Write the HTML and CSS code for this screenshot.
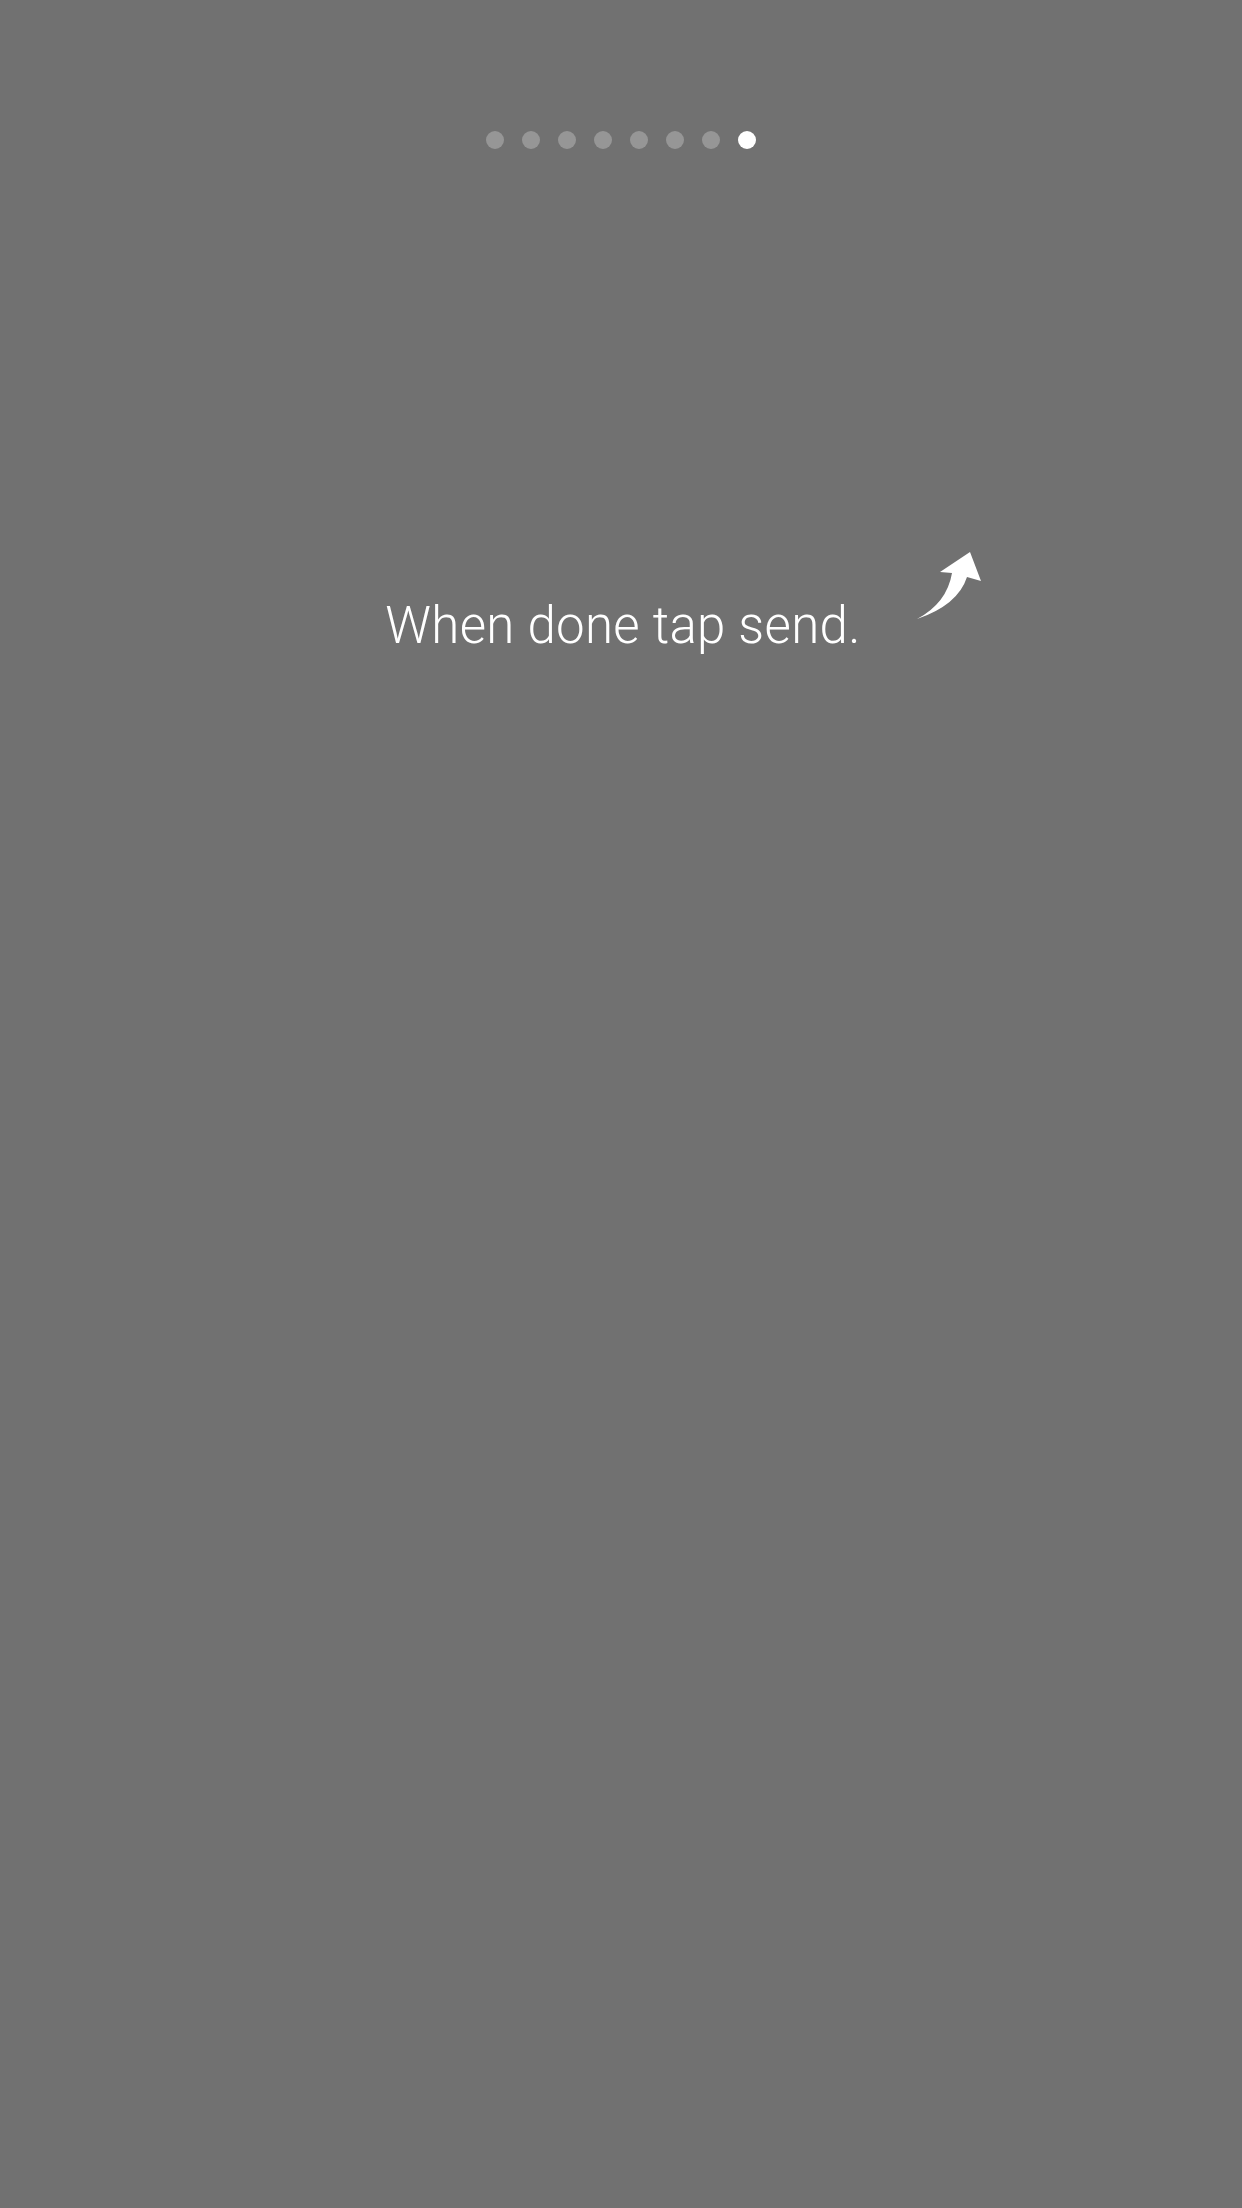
FILE: index.html
```html
<!DOCTYPE html>
<html>
<head>
<meta charset="utf-8">
<link rel="stylesheet" href="styles.css">
</head>
<body>
<div class="screen">
  <div class="pager">
    <span class="dot"></span>
    <span class="dot"></span>
    <span class="dot"></span>
    <span class="dot"></span>
    <span class="dot"></span>
    <span class="dot"></span>
    <span class="dot"></span>
    <span class="dot active"></span>
  </div>
  <div class="hint">
    <p class="hint-text">When done tap send.</p>
    <svg class="arrow" width="80" height="80" viewBox="0 0 80 80">
      <path d="M60 7 L71 36 L57 32 Q48 60 7 74 Q37 58 42 28 L30 27 Z" fill="#ffffff"/>
    </svg>
  </div>
</div>
</body>
</html>
```
FILE: styles.css
```css
html, body {
  margin: 0;
  padding: 0;
  background: #717171;
}
.screen {
  width: 1242px;
  height: 2208px;
  display: flex;
  flex-direction: column;
  align-items: center;
  background: #717171;
}
.pager {
  display: flex;
  gap: 18px;
  margin-top: 131px;
}
.dot {
  width: 18px;
  height: 18px;
  border-radius: 50%;
  background: #969696;
}
.dot.active {
  background: #ffffff;
}
.hint {
  position: relative;
  width: 1242px;
  margin-top: 446px;
}
.hint-text {
  margin: 0;
  padding-left: 4px;
  text-align: center;
  color: #ffffff;
  font-family: Roboto, "Liberation Sans", sans-serif;
  font-weight: 300;
  font-size: 51px;
  letter-spacing: 0.3px;
  line-height: 62px;
}
.arrow {
  position: absolute;
  left: 910px;
  top: -50px;
}
```
